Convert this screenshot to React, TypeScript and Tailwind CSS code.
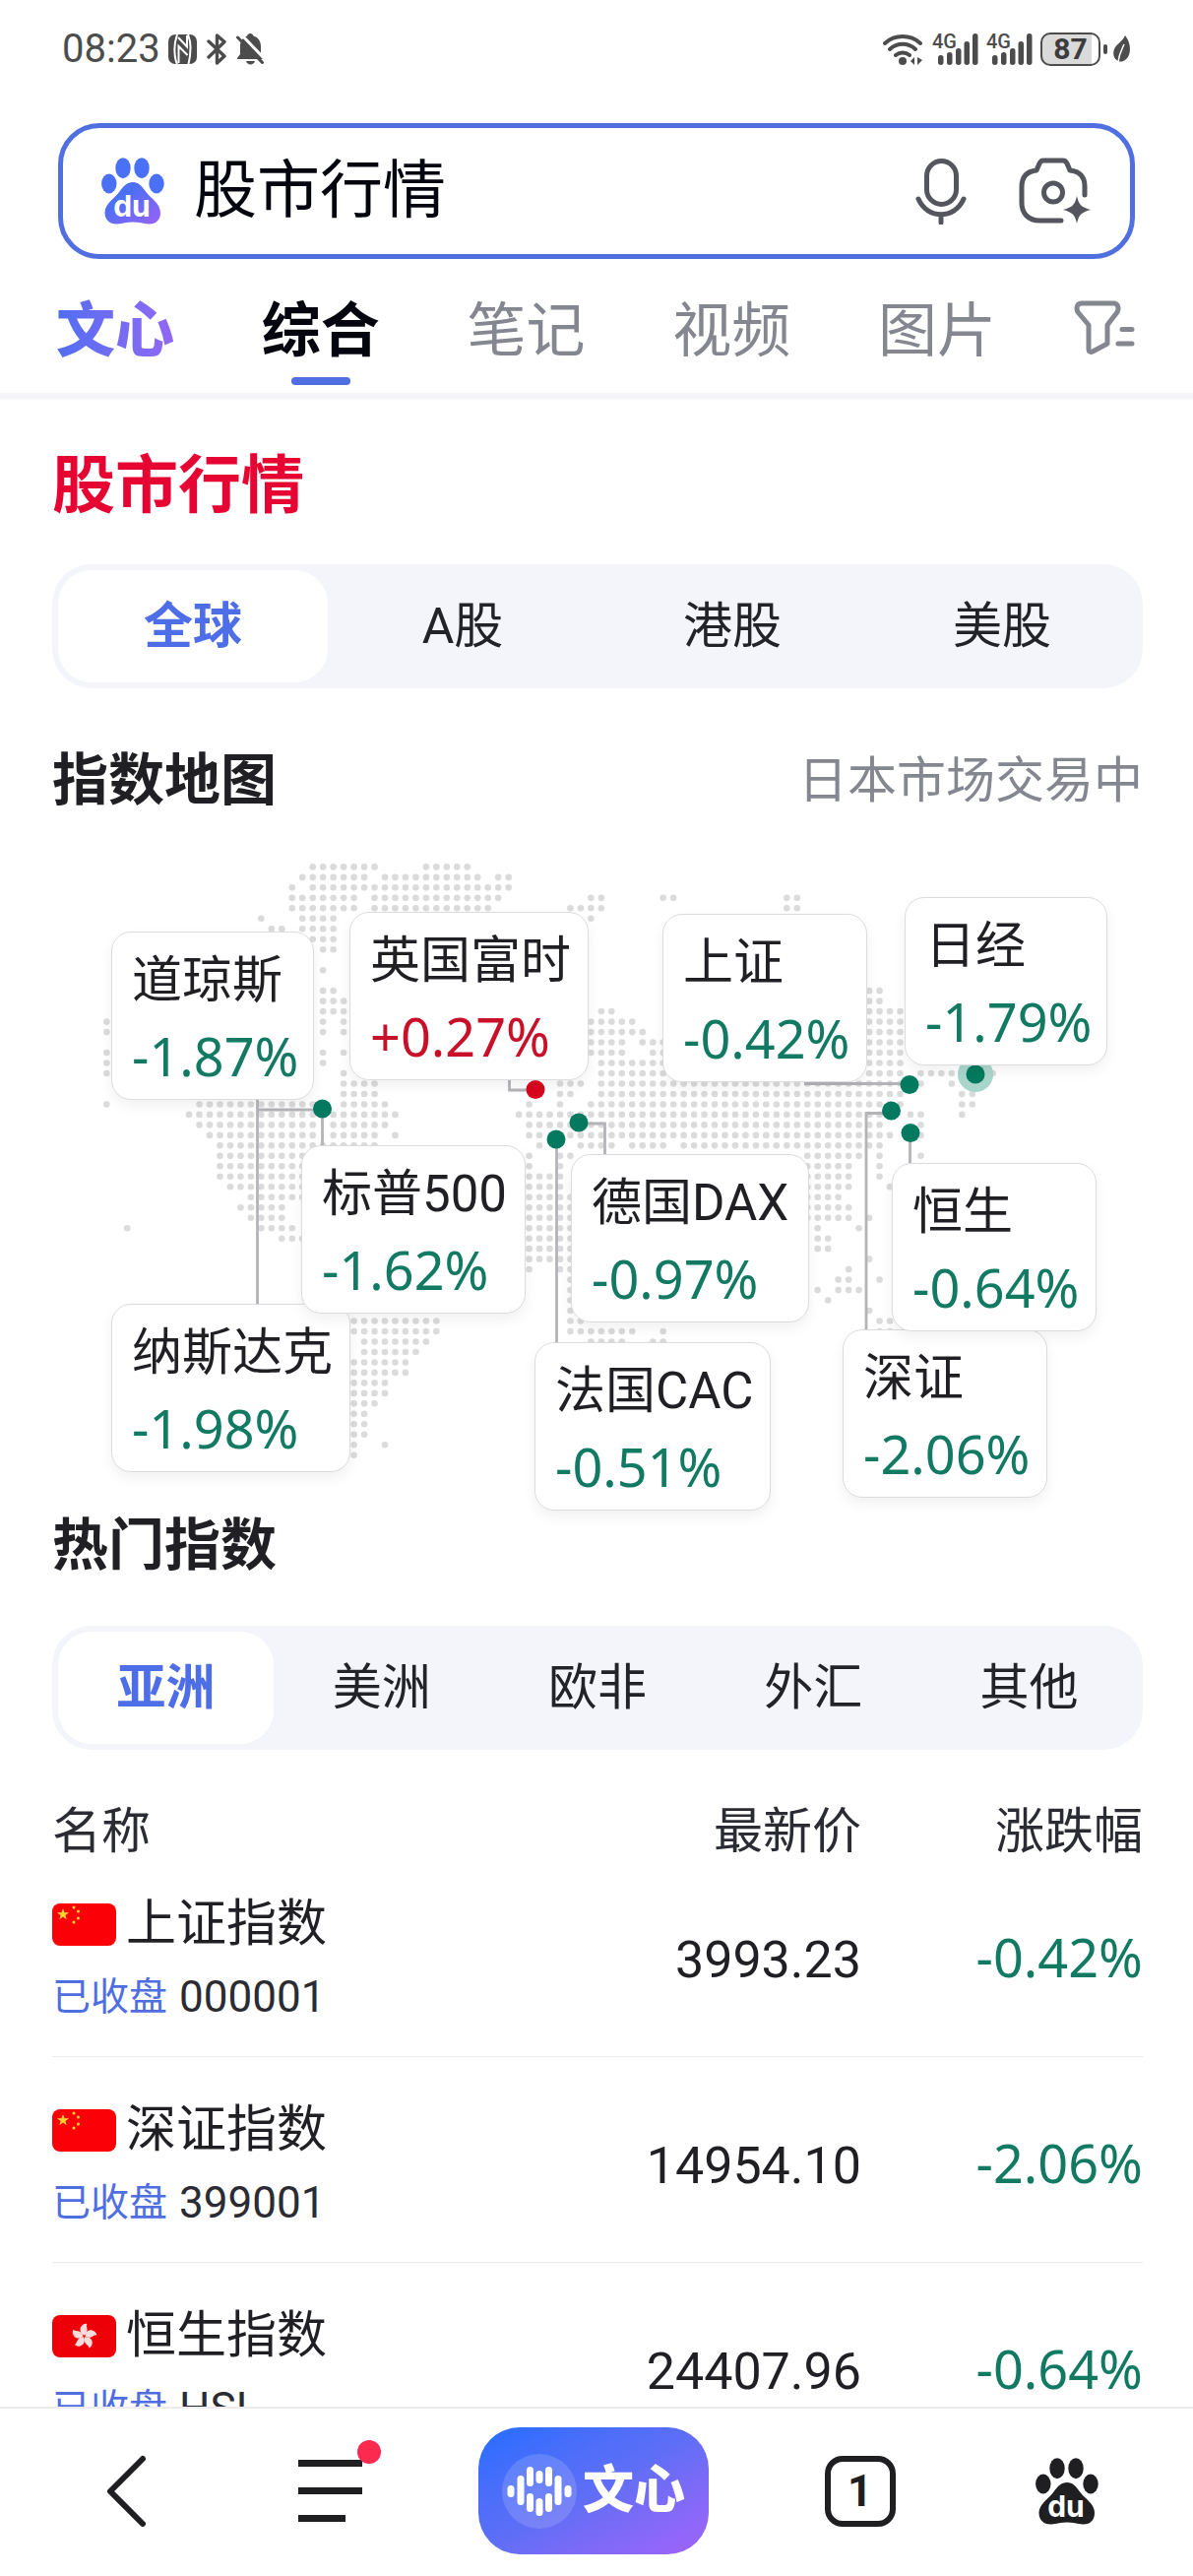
import React from "react";

type IndexCard = {
  name: string;
  change: string;
  className: string;
};

// [row, first column, last column] runs of dots that make up the world map
const MAP_RUNS = [
  [0, 20, 26], [0, 31, 35],
  [1, 19, 25], [1, 27, 36], [1, 38, 39],
  [2, 18, 18], [2, 20, 39],
  [3, 18, 24], [3, 26, 38], [3, 47, 48], [3, 54, 55], [3, 66, 67],
  [4, 18, 24], [4, 26, 37], [4, 45, 48], [4, 66, 67],
  [5, 15, 15], [5, 19, 22], [5, 47, 47],
  [6, 16, 17], [6, 19, 22],
  [7, 20, 22],
  [8, 21, 22],
  [10, 21, 21],
  [12, 21, 22], [12, 74, 75],
  [13, 21, 23], [13, 74, 75],
  [14, 21, 23], [14, 48, 49], [14, 74, 77],
  [15, 0, 0], [15, 21, 21], [15, 23, 23], [15, 47, 51], [15, 74, 77],
  [16, 0, 0], [16, 21, 21], [16, 23, 23], [16, 47, 52], [16, 74, 77],
  [17, 47, 50], [17, 52, 54], [17, 74, 77],
  [18, 0, 0], [18, 21, 21], [18, 23, 23], [18, 47, 50], [18, 53, 54], [18, 74, 77],
  [19, 0, 0], [19, 21, 21], [19, 48, 54], [19, 74, 77],
  [20, 0, 0], [20, 23, 23], [20, 48, 54], [20, 74, 77], [20, 79, 82], [20, 86, 86],
  [21, 23, 26], [21, 44, 46], [21, 48, 77], [21, 79, 79], [21, 82, 82],
  [22, 23, 26], [22, 44, 45], [22, 48, 77], [22, 83, 84],
  [23, 0, 0], [23, 9, 20], [23, 23, 27], [23, 41, 41], [23, 44, 44], [23, 47, 77], [23, 83, 84],
  [24, 8, 20], [24, 22, 28], [24, 40, 76], [24, 78, 79], [24, 83, 83],
  [25, 9, 20], [25, 22, 27], [25, 41, 75], [25, 79, 79],
  [26, 10, 20], [26, 22, 26], [26, 28, 28], [26, 41, 42], [26, 45, 76], [26, 79, 79],
  [27, 11, 26], [27, 42, 42], [27, 46, 49], [27, 51, 54], [27, 56, 75],
  [28, 11, 19], [28, 41, 41], [28, 44, 45], [28, 68, 73], [28, 75, 75], [28, 79, 79],
  [29, 11, 19], [29, 41, 41], [29, 44, 44], [29, 68, 72], [29, 75, 75],
  [30, 11, 19], [30, 41, 44], [30, 68, 72], [30, 75, 75],
  [31, 12, 19], [31, 41, 44], [31, 68, 72], [31, 76, 76],
  [32, 14, 19], [32, 41, 45], [32, 68, 71],
  [33, 13, 17], [33, 41, 45], [33, 68, 72],
  [34, 14, 17], [34, 41, 45], [34, 68, 72], [34, 74, 74],
  [35, 2, 2], [35, 15, 18], [35, 41, 45], [35, 69, 69], [35, 73, 73],
  [36, 17, 19], [36, 41, 45], [36, 69, 70],
  [37, 41, 45], [37, 69, 70],
  [38, 41, 45], [38, 74, 74],
  [39, 41, 41], [39, 44, 45], [39, 72, 72],
  [40, 45, 45], [40, 71, 72], [40, 75, 75],
  [41, 45, 45], [41, 69, 69], [41, 71, 73],
  [42, 45, 45], [42, 70, 70],
  [43, 45, 45], [43, 74, 74],
  [44, 24, 32], [44, 45, 46], [44, 75, 76],
  [45, 24, 32], [45, 45, 51], [45, 54, 54], [45, 75, 76],
  [46, 25, 31], [46, 47, 50], [46, 53, 54],
  [47, 25, 30],
  [48, 24, 29],
  [49, 24, 29],
  [50, 24, 27],
  [51, 24, 27],
  [52, 24, 26],
  [53, 24, 25],
  [54, 24, 25],
  [55, 24, 25],
  [56, 24, 24], [56, 27, 27],
  [57, 24, 24],
];

// later cards lie over earlier ones
const CARDS: IndexCard[] = [
  { name: "道琼斯", change: "-1.87%", className: "left-[60px] top-[80px] w-[206px]" },
  { name: "英国富时", change: "+0.27%", className: "left-[302px] top-[60px] w-[243px]" },
  { name: "上证", change: "-0.42%", className: "left-[620px] top-[62px] w-[208px]" },
  { name: "日经", change: "-1.79%", className: "left-[866px] top-[45px] w-[206px]" },
  { name: "纳斯达克", change: "-1.98%", className: "left-[60px] top-[458px] w-[243px]" },
  { name: "标普500", change: "-1.62%", className: "left-[253px] top-[297px] w-[228px]" },
  { name: "德国DAX", change: "-0.97%", className: "left-[527px] top-[306px] w-[242px]" },
  { name: "法国CAC", change: "-0.51%", className: "left-[490px] top-[497px] w-[240px]" },
  { name: "深证", change: "-2.06%", className: "left-[803px] top-[484px] w-[208px]" },
  { name: "恒生", change: "-0.64%", className: "left-[853px] top-[315px] w-[208px]" },
];

const ROWS = [
  { name: "上证指数", code: "000001", price: "3993.23", change: "-0.42%", flag: "cn" },
  { name: "深证指数", code: "399001", price: "14954.10", change: "-2.06%", flag: "cn" },
  { name: "恒生指数", code: "HSI", price: "24407.96", change: "-0.64%", flag: "hk" },
];

const Paw = ({ fill, toes }: { fill: string; toes: string }) => (
  <svg width="64" height="68" viewBox="0 0 64 68" className="shrink-0">
    <defs>
      <linearGradient id="paw" x1="0" y1="0" x2="1" y2="1">
        <stop offset="0.3" stopColor="#4a70f5" />
        <stop offset="1" stopColor="#9a62f8" />
      </linearGradient>
    </defs>
    <g fill={toes}>
      <ellipse cx="22" cy="10.7" rx="7.7" ry="10.5" />
      <ellipse cx="41" cy="10.7" rx="7.7" ry="10.5" />
      <ellipse cx="7.8" cy="26.5" rx="7.7" ry="10" />
      <ellipse cx="56" cy="26.5" rx="7.7" ry="10" />
    </g>
    <path
      d="M32 25c6 0 9 4 13 9.500 5 7 15 12 15 21.500 0 8-5.500 12-12 11.500-6-.5-10-2-16-2s-10 1.500-16 2C9.500 68 3.500 64 3.500 56c0-9 10-14.500 15-21.500C22.500 29 26 25 32 25Z"
      fill={fill}
    />
    <text x="31" y="60" textAnchor="middle" fontSize="30" fontWeight="700" fill="#fff" fontFamily="Inter, sans-serif">
      du
    </text>
  </svg>
);

const Signal = () => (
  <svg width="47" height="40" viewBox="0 -3 47 40" fill="#4c4c4c">
    <text x="0" y="16" fontSize="20" fontWeight="500" fontFamily="Roboto, sans-serif">
      4G
    </text>
    <rect x="6" y="23" width="5.500" height="10" rx="2.700" />
    <rect x="15" y="20" width="5.500" height="13" rx="2.700" />
    <rect x="24" y="16" width="5.500" height="17" rx="2.700" />
    <rect x="32.500" y="9" width="5.500" height="24" rx="2.700" />
    <rect x="41" y="1" width="5.500" height="32" rx="2.700" />
  </svg>
);

const StatusBar = () => (
  <div className="flex h-[100px] items-center justify-between px-[63px] text-[#4c4c4c]">
    <div className="flex items-center gap-2">
      <span className="text-[40px] leading-[60px]">08:23</span>
      <svg width="29" height="30" viewBox="0 0 29 30">
        <rect width="29" height="30" rx="7" fill="#4c4c4c" />
        <path d="M9 0C7 6 6 12 6.500 18 6.700 23 7.500 27 9 30" fill="none" stroke="#fff" strokeWidth="2" />
        <path d="M20 0c1.500 4 2.500 8 2.500 13 0 6-.5 11-2 17" fill="none" stroke="#fff" strokeWidth="2" />
        <path d="M10.500 29V12l9 9M10 3l9 9.500V1" fill="none" stroke="#fff" strokeWidth="2" />
      </svg>
      <svg width="20" height="32" viewBox="0 0 20 32" fill="none" stroke="#4c4c4c" strokeWidth="3.400" strokeLinejoin="round" strokeLinecap="round" className="mx-[2px]">
        <path d="M2 8l16 15-7.500 7V2L18 8.500 2 24" />
      </svg>
      <svg width="28" height="32" viewBox="0 0 28 32" fill="#4c4c4c">
        <path d="M14 0c2 0 3 1 3.500 2.500C22.500 4 25 8 25 13v9l2 3v1H1v-1l3-4v-8c0-5 2.500-9 7-10.500C11.500 1 12.500 0 14 0Z" />
        <path d="M10 28h9c-.5 2-2.500 3.500-4.500 3.500S10.500 30 10 28Z" />
        <path d="M0 0h10L4 7H0z" fill="#fff" />
        <path d="M5 1L29 26" stroke="#fff" strokeWidth="3" />
        <path d="M1.500 4L26.500 29.500" stroke="#4c4c4c" strokeWidth="3" strokeLinecap="round" />
      </svg>
    </div>
    <div className="flex items-center gap-2">
      <svg width="42" height="34" viewBox="0 0 42 34" fill="none" stroke="#4c4c4c" strokeWidth="4" strokeLinecap="round">
        <path d="M2 11a27 27 0 0 1 36 0M7 17a19 19 0 0 1 26 0M13 23a11 11 0 0 1 14 0" />
        <circle cx="20" cy="29" r="4" fill="#4c4c4c" stroke="none" />
        <path d="M32 25v8l-4-4zM35 25v8l5-5z" fill="#4c4c4c" stroke="none" />
      </svg>
      <Signal />
      <Signal />
      <div className="flex items-center gap-[3px]">
        <div className="flex h-[34px] w-[61px] items-center justify-center rounded-[10px] border-2 border-[#4c4c4c] bg-linear-to-r from-[#dadada] from-88% to-white to-88% text-[30px] font-bold leading-none text-[#3c3c3c]">
          87
        </div>
        <div className="h-[10px] w-1 rounded-full bg-[#4c4c4c]" />
        <svg width="19" height="28" viewBox="0 0 19 28" className="ml-[2px]">
          <path d="M13 0c4 5 6 12 4.500 18-1.500 6-6 9-10 8.500C2 25 .5 20 1.500 15.500 3 9 10 7 13 0Z" fill="#4c4c4c" />
          <path d="M12 9c-2 5-5 9-6 18" stroke="#fff" strokeWidth="1.500" fill="none" />
        </svg>
      </div>
    </div>
  </div>
);

const SearchBox = () => (
  <form className="mx-[59px] mt-[25px] flex h-[138px] items-center rounded-[42px] border-[5px] border-[#5070e0] px-[39px]">
    <Paw fill="url(#paw)" toes="#4a70f5" />
    <input
      aria-label="搜索"
      defaultValue="股市行情"
      className="ml-[30px] min-w-0 flex-1 bg-transparent text-[64px] leading-[90px] text-[#05050f] outline-none"
    />
    <button type="button" aria-label="语音搜索">
      <svg width="52" height="68" viewBox="0 0 52 68" fill="none" stroke="#54555d" strokeWidth="5" strokeLinecap="round">
        <rect x="11.500" y="3.500" width="30" height="44" rx="15" />
        <path d="M3 42c9 21 37 21 46 0M26 58v8" />
      </svg>
    </button>
    <button type="button" aria-label="拍照搜索" className="ml-[53px]">
      <svg width="74" height="68" viewBox="0 0 74 68" fill="none" stroke="#54555d" strokeWidth="5" strokeLinecap="round" strokeLinejoin="round">
        <path d="M43 64H21C10 64 3 57 3 46V30c0-10 5-16 15-17l3-7c1-2 2-3 4-3h20c2 0 3 1 4 3l3 7c10 1 15 7 15 16v9" />
        <circle cx="35" cy="35.500" r="9.500" />
        <path d="M59 39c2 9 4 11 14 14-10 3-12 5-14 14-2-9-4-11-14-14 10-3 12-5 14-14Z" fill="#54555d" stroke="none" />
      </svg>
    </button>
  </form>
);

const SearchTabs = () => (
  <nav className="mt-[34px] flex items-start border-b-[7px] border-[#f5f5fa] pb-2 pl-[57px] pr-[59px] text-[60px] leading-[80px] text-[#858790]">
    <div className="flex flex-1 justify-between pr-[79px]">
      <a href="#wenxin" className="bg-linear-to-r from-[#4f6ef2] to-[#9068f5] bg-clip-text font-black text-transparent">
        文心
      </a>
      <a href="#all" className="flex flex-col items-center gap-[6px] font-bold text-[#05050f]">
        综合
        <span className="h-2 w-[60px] rounded-full bg-[#4e6ee2]" />
      </a>
      <a href="#notes">笔记</a>
      <a href="#video">视频</a>
      <a href="#images">图片</a>
    </div>
    <button aria-label="筛选" className="pt-2">
      <svg width="62" height="56" viewBox="0 0 62 56" fill="none" stroke="#858790" strokeWidth="5" strokeLinecap="round" strokeLinejoin="round">
        <path d="M8 3h32c5 0 6 5 4 9L34 25v19l-15 8c-2 1-4 0-4-2V25L4 12C2 8 3 3 8 3Z" />
        <path d="M49 29.500h10M45 44h14" />
      </svg>
    </button>
  </nav>
);

const Segmented = ({ items, className }: { items: string[]; className: string }) => (
  <div className={`flex h-[126px] rounded-[40px] bg-[#f4f5fa] p-[6px] text-[50px] text-[#222329] ${className}`}>
    {items.map((item, i) => (
      <button
        key={item}
        className={i === 0 ? "flex-1 rounded-[34px] bg-white font-bold text-[#4e6ee8]" : "flex-1"}
      >
        {item}
      </button>
    ))}
  </div>
);

const IndexMap = () => (
  <div className="relative mt-[33px] h-[664px]">
    <svg width="1108" height="661" viewBox="54 866 1108 661" className="absolute left-0 top-0">
      <g fill="#dbdbdb">
        {MAP_RUNS.map(([row, from, to]) =>
          Array.from({ length: to - from + 1 }, (_, i) => (
            <circle
              key={`${row}-${from + i}`}
              cx={109.3 + (from + i) * 10.47}
              cy={880.4 + row * 10.48}
              r="3.300"
            />
          ))
        )}
      </g>
      <g fill="none" stroke="#b4b4b8" strokeWidth="2.800">
        <path d="M262.500 1110V1330M262.500 1127H328.500V1170" />
        <path d="M518.500 1090V1107H545" />
        <path d="M589 1141H615.500V1180" />
        <path d="M566.500 1157V1370" />
        <path d="M818 1100.500H925" />
        <path d="M906 1130.500H881V1356" />
        <path d="M925.500 1150V1190" />
      </g>
      <circle cx="992" cy="1091" r="18" fill="#a9d6cb" />
      <g fill="#037a5f">
        <circle cx="328.500" cy="1126" r="9.500" />
        <circle cx="589" cy="1140" r="9.500" />
        <circle cx="566" cy="1157" r="9.500" />
        <circle cx="925" cy="1101.500" r="9.500" />
        <circle cx="906.500" cy="1128" r="9.500" />
        <circle cx="926" cy="1150.500" r="9.500" />
        <circle cx="992" cy="1091" r="9.500" />
        <circle cx="545" cy="1106.500" r="9.500" fill="#d9061f" />
      </g>
    </svg>
    {CARDS.map((card) => (
      <div
        key={card.name}
        className={`absolute h-[171px] whitespace-nowrap rounded-[20px] border border-[#dcdcdf] bg-white pl-5 pt-[9px] shadow-[0_6px_14px_rgba(0,0,0,0.06)] ${card.className}`}
      >
        <div className="text-[51px] leading-[80px] text-[#1f1f24]">{card.name}</div>
        <div
          className={
            card.change.startsWith("+")
              ? "font-['Noto_Sans',sans-serif] text-[54px] leading-[72px] text-[#c91029]"
              : "font-['Noto_Sans',sans-serif] text-[54px] leading-[72px] text-[#127a62]"
          }
        >
          {card.change}
        </div>
      </div>
    ))}
  </div>
);

const Flag = ({ code }: { code: string }) => (
  <svg width="65" height="43" viewBox="0 0 65 43" className="shrink-0">
    <rect width="65" height="43" rx="8" fill={code === "cn" ? "#fb0007" : "#ee0008"} />
    {code === "cn" ? (
      <g fill="#ffd92e">
        <path d="M11 5l1.500 4.200h4.500l-3.600 2.700 1.300 4.300L11 13.600l-3.700 2.600 1.300-4.300L5 9.200h4.500Z" />
        <circle cx="22" cy="4" r="1.500" />
        <circle cx="26.500" cy="8" r="1.500" />
        <circle cx="26.500" cy="15" r="1.500" />
        <circle cx="22" cy="19" r="1.500" />
      </g>
    ) : (
      <g fill="#fbdcdc">
        {[0, 72, 144, 216, 288].map((angle) => (
          <path
            key={angle}
            d="M32.500 20.500c-4.500-2-5-7-2.500-9.500 1.500-2 4-2.500 5.500-2-1.500 2 .5 4 0 7-.3 2-1.500 3.500-3 4.500Z"
            transform={`rotate(${angle} 32.500 21.500)`}
          />
        ))}
      </g>
    )}
  </svg>
);

const IndexTable = () => (
  <table className="mt-[63px] w-full table-fixed">
    <thead>
      <tr className="h-10 text-[50px] leading-[40px] text-[#2b2c33]">
        <th className="p-0 text-left font-normal">名称</th>
        <th className="w-[300px] p-0 text-right font-normal">最新价</th>
        <th className="w-[286px] p-0 text-right font-normal">涨跌幅</th>
      </tr>
    </thead>
    <tbody>
      {ROWS.map((row) => (
        <tr key={row.code} className="border-b border-[#ebebed]">
          <td className="px-0 pb-[30px] pt-[44px]">
            <div className="flex items-center gap-[10px] text-[51px] leading-[60px] text-[#1f1f24]">
              <Flag code={row.flag} />
              {row.name}
            </div>
            <div className="mt-[14px] flex items-center gap-3 text-[44px] leading-[60px] text-[#2b2c33]">
              <span className="text-[39px] text-[#4e6ee2]">已收盘</span>
              {row.code}
            </div>
          </td>
          <td className="px-0 pb-[30px] pt-[44px] text-right text-[52px] leading-[60px] text-[#1f1f24]">{row.price}</td>
          <td className="px-0 pb-[34px] pt-10 text-right font-['Noto_Sans',sans-serif] text-[54px] leading-[60px] text-[#127a62]">
            {row.change}
          </td>
        </tr>
      ))}
    </tbody>
  </table>
);

const BottomBar = () => (
  <footer className="flex h-[172px] shrink-0 items-start justify-between border-t-2 border-[#ececee] bg-white px-[71px] pt-[19px]">
    <button aria-label="返回" className="flex h-[129px] w-[114px] items-center justify-center">
      <svg width="42" height="74" viewBox="0 0 42 74" fill="none" stroke="#1f1f22" strokeWidth="6" strokeLinecap="round" strokeLinejoin="round">
        <path d="M38 4L5 37l33 33" />
      </svg>
    </button>
    <button aria-label="菜单" className="relative flex h-[129px] w-[66px] flex-col items-start justify-center gap-[21px]">
      <span className="h-[7px] w-[65px] bg-[#1f1f22]" />
      <span className="h-[7px] w-[65px] bg-[#1f1f22]" />
      <span className="h-[7px] w-[48px] bg-[#1f1f22]" />
      <span className="absolute left-[60px] top-[13px] size-6 rounded-full bg-[#fd2a50]" />
    </button>
    <button className="flex h-[129px] w-[234px] items-center justify-center gap-[6px] rounded-[42px] bg-linear-to-br from-[#1f6dff] via-[#5f6ef6] to-[#a062fa] text-[52px] font-black text-white">
      <svg width="76" height="76" viewBox="0 0 76 76" fill="#fff">
        <circle cx="38" cy="38" r="38" fill="#fff" fillOpacity="0.15" />
        <rect x="5.500" y="32" width="7" height="12" rx="3.500" />
        <rect x="15.500" y="22" width="7" height="30" rx="3.500" />
        <rect x="25" y="13" width="7" height="20" rx="3.500" />
        <rect x="25" y="40" width="7" height="19" rx="3.500" />
        <rect x="34.500" y="17" width="7" height="13" rx="3.500" />
        <rect x="34.500" y="45" width="7" height="18" rx="3.500" />
        <rect x="44" y="13" width="7" height="20" rx="3.500" />
        <rect x="44" y="40" width="7" height="19" rx="3.500" />
        <rect x="53.500" y="22" width="7" height="30" rx="3.500" />
        <rect x="63.500" y="32" width="7" height="12" rx="3.500" />
      </svg>
      文心
    </button>
    <button className="flex h-[129px] w-[72px] items-center">
      <span className="flex size-[72px] items-center justify-center rounded-[18px] border-[6px] border-[#1f1f22] text-[44px] font-bold leading-none text-[#1f1f22]">
        1
      </span>
    </button>
    <button aria-label="首页" className="flex h-[129px] w-[114px] items-center justify-center">
      <Paw fill="#1f1f22" toes="#1f1f22" />
    </button>
  </footer>
);

export default function App() {
  return (
    <div className="flex h-screen flex-col bg-white font-[Roboto,'Noto_Sans_CJK_SC',sans-serif]">
      <main className="min-h-0 flex-1 overflow-y-auto [scrollbar-width:none]">
        <StatusBar />
        <SearchBox />
        <SearchTabs />
        <section className="pl-[53px] pr-[51px] pt-[52px]">
          <h1 className="text-[64px] font-bold leading-[72px] text-[#e60432]">股市行情</h1>
          <Segmented items={["全球", "A股", "港股", "美股"]} className="mt-[43px]" />
          <div className="mt-[54px] flex items-center justify-between leading-[80px]">
            <h2 className="text-[57px] font-bold text-[#1f1f24]">指数地图</h2>
            <span className="text-[50px] text-[#858790]">日本市场交易中</span>
          </div>
          <IndexMap />
          <h2 className="text-[57px] font-bold leading-[80px] text-[#1f1f24]">热门指数</h2>
          <Segmented items={["亚洲", "美洲", "欧非", "外汇", "其他"]} className="mt-[41px]" />
          <IndexTable />
        </section>
      </main>
      <BottomBar />
    </div>
  );
}
